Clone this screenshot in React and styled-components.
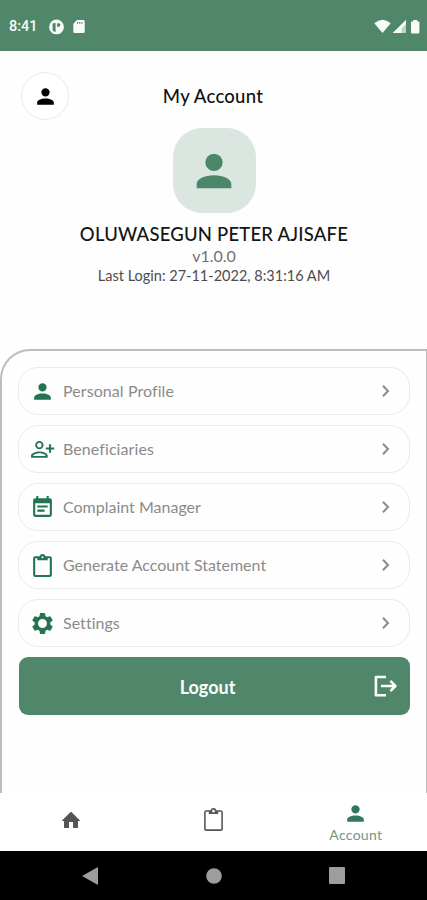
import React from "react";
import styled, { createGlobalStyle } from "styled-components";

const Global = createGlobalStyle`
  * { box-sizing: border-box; }
  body { margin: 0; background: #fff; font-family: Lato, "Open Sans", sans-serif; }
`;

const Screen = styled.div`
  width: 427px;
  height: 900px;
  display: flex;
  flex-direction: column;
  overflow: hidden;
  background: #fefefe;
`;

const StatusBar = styled.div`
  height: 51px;
  flex: none;
  display: flex;
  align-items: center;
  justify-content: space-between;
  padding: 2px 5px 0 9px;
  background: #50876b;
  color: #f7fcf8;
`;

const StatusGroup = styled.div`
  display: flex;
  align-items: center;
  gap: ${(p) => p.$gap}px;
`;

const Clock = styled.span`
  width: 30px;
  margin-right: 2px;
  font: 500 14.5px/18px Roboto, sans-serif;
  white-space: nowrap;
`;

const Header = styled.header`
  height: 77px;
  flex: none;
  display: grid;
  grid-template-columns: 48px 1fr 48px;
  align-items: center;
  padding: 13px 22px 0 21px;
`;

const RoundButton = styled.button`
  width: 48px;
  height: 48px;
  display: flex;
  align-items: center;
  justify-content: center;
  padding: 0;
  border: 1px solid #e9ecec;
  border-radius: 50%;
  background: #fff;
  color: #000;
`;

const Title = styled.h1`
  margin: 0;
  text-align: center;
  font-size: 18.5px;
  font-weight: 500;
  line-height: 24px;
  letter-spacing: 0.25px;
  color: #111;
`;

const Profile = styled.section`
  height: 221px;
  flex: none;
  display: flex;
  flex-direction: column;
  align-items: center;
  padding-left: 1px;
`;

const Avatar = styled.div`
  width: 83px;
  height: 85px;
  display: flex;
  align-items: center;
  justify-content: center;
  border-radius: 29px;
  background: #dce6e1;
  color: #4c8769;
`;

const Line = styled.div`
  margin-top: ${(p) => p.$top}px;
  font-size: ${(p) => p.$size}px;
  font-weight: ${(p) => p.$weight || 400};
  line-height: 20px;
  letter-spacing: ${(p) => p.$spacing || 0}px;
  color: ${(p) => p.$color};
  white-space: nowrap;
`;

const Panel = styled.main`
  height: 444px;
  flex: none;
  display: flex;
  flex-direction: column;
  gap: 10px;
  padding: 16px 16px 0 16px;
  border: 2px solid #bdbdbd;
  border-right-width: 1px;
  border-bottom: 0;
  border-top-left-radius: 30px;
`;

const MenuRow = styled.button`
  width: 392px;
  height: 48px;
  flex: none;
  display: grid;
  grid-template-columns: 25px 1fr 22px;
  align-items: center;
  column-gap: 8px;
  padding: 0 12px 0 11px;
  border: 1px solid #e8ebeb;
  border-radius: 20px;
  background: #fefefe;
  color: #237453;
  text-align: left;
`;

const MenuLabel = styled.span`
  font: 400 16px/20px Lato, sans-serif;
  letter-spacing: ${(p) => p.$spacing || 0}px;
  color: #8b8b8b;
`;

const LogoutButton = styled.button`
  width: 391px;
  height: 58px;
  flex: none;
  display: grid;
  grid-template-columns: 15px 1fr 28px;
  align-items: center;
  margin-left: 1px;
  padding: 0 11px 0 10px;
  border: 0;
  border-radius: 9px;
  background: #50876b;
  color: #fafffb;
`;

const LogoutLabel = styled.span`
  grid-column: 2;
  padding-top: 2px;
  font: 700 18px/22px Lato, sans-serif;
`;

const TabBar = styled.nav`
  height: 58px;
  flex: none;
  display: grid;
  grid-template-columns: repeat(3, 1fr);
  background: #fff;
`;

const Tab = styled.div`
  display: flex;
  flex-direction: column;
  align-items: center;
  justify-content: center;
  padding-bottom: ${(p) => p.$bottom || 0}px;
  color: ${(p) => (p.$active ? "#30795a" : "#555")};
`;

const TabLabel = styled.span`
  font-size: 14px;
  line-height: 17px;
  letter-spacing: 0.3px;
  color: #6a9a82;
`;

const SystemBar = styled.div`
  height: 49px;
  flex: none;
  display: flex;
  align-items: center;
  justify-content: space-between;
  padding: 0 82px 0 82px;
  background: #000;
  color: #9d9d9d;
`;

const Svg = styled.svg`
  display: block;
  flex: none;
  fill: currentColor;
`;

const ChevronSvg = styled(Svg)`
  fill: none;
  stroke: #8b8b8b;
  stroke-width: 2;
`;

const LogoutSvg = styled(Svg)`
  fill: none;
  stroke: currentColor;
  stroke-width: 2.6;
  stroke-linejoin: round;
`;

const paths = {
  person:
    "M12 4a4 4 0 1 1 0 8a4 4 0 0 1 0-8M12 14c4.42 0 8 1.79 8 4v2H4v-2c0-2.21 3.58-4 8-4Z",
  personAdd:
    "M9 3.8a4 4 0 1 1 0 8a4 4 0 0 1 0-8m0 1.8a2.2 2.2 0 1 0 0 4.4a2.2 2.2 0 0 0 0-4.4M9 13.8c2.67 0 8 1.34 8 4V20H1v-2.2c0-2.66 5.33-4 8-4m0 1.8c-2.7 0-5.8 1.3-6.1 2.6h12.2c-.3-1.3-3.4-2.6-6.1-2.6M18.2 7h2v3h3v2h-3v3h-2v-3h-3v-2h3Z",
  note:
    "M17 10H7v2h10v-2m2-7h-1V1h-2v2H8V1H6v2H5a2 2 0 0 0-2 2v14a2 2 0 0 0 2 2h14a2 2 0 0 0 2-2V5a2 2 0 0 0-2-2m0 16H5V8h14v11m-5-5H7v2h7v-2Z",
  clipboard:
    "M19 3h-4.18C14.4 1.84 13.3 1 12 1s-2.4.84-2.82 2H5a2 2 0 0 0-2 2v16a2 2 0 0 0 2 2h14a2 2 0 0 0 2-2V5a2 2 0 0 0-2-2m-7 0a1 1 0 1 1 0 2a1 1 0 0 1 0-2M7 7h10V5h2v16H5V5h2v2Z",
  clipboardThin:
    "M19 3h-4.18C14.4 1.84 13.3 1 12 1s-2.4.84-2.82 2H5a2 2 0 0 0-2 2v16a2 2 0 0 0 2 2h14a2 2 0 0 0 2-2V5a2 2 0 0 0-2-2m-7-.3a1.3 1.3 0 1 1 0 2.6a1.3 1.3 0 0 1 0-2.6M7.5 6.8h9V4.6h3v16.8h-15V4.6h3v2.2Z",
  gear:
    "M12 16.3a4.3 4.3 0 1 1 0-8.6a4.3 4.3 0 0 1 0 8.6m7.43-3.33c.04-.32.07-.64.07-.97s-.03-.66-.07-1l2.11-1.63c.19-.15.24-.42.12-.64l-2-3.46c-.12-.22-.39-.31-.61-.22l-2.49 1c-.52-.39-1.06-.73-1.69-.98l-.37-2.65A.506.506 0 0 0 14 2h-4c-.25 0-.46.18-.5.42l-.37 2.65c-.63.25-1.17.59-1.69.98l-2.49-1c-.22-.09-.49 0-.61.22l-2 3.46c-.13.22-.07.49.12.64L4.57 11c-.04.34-.07.67-.07 1s.03.65.07.97l-2.11 1.66c-.19.15-.25.42-.12.64l2 3.46c.12.22.39.3.61.22l2.49-1.01c.52.4 1.06.74 1.69.99l.37 2.65c.04.24.25.42.5.42h4c.25 0 .46-.18.5-.42l.37-2.65c.63-.26 1.17-.59 1.69-.99l2.49 1.01c.22.08.49 0 .61-.22l2-3.46c.12-.22.07-.49-.12-.64l-2.11-1.66Z",
};

function Icon({ name, size }) {
  return (
    <Svg width={size} height={size} viewBox="0 0 24 24">
      <path d={paths[name]} fillRule="evenodd" />
    </Svg>
  );
}

function Chevron() {
  return (
    <ChevronSvg width="22" height="22" viewBox="0 0 22 22">
      <path d="M8 5.8l5 5.2L8 16.2" />
    </ChevronSvg>
  );
}

const menu = [
  { icon: "person", label: "Personal Profile", spacing: 0.08 },
  { icon: "personAdd", label: "Beneficiaries", spacing: 0.08 },
  { icon: "note", label: "Complaint Manager" },
  { icon: "clipboard", label: "Generate Account Statement" },
  { icon: "gear", label: "Settings", spacing: 0.04 },
];

export default function App() {
  return (
    <Screen>
      <Global />
      <StatusBar>
        <StatusGroup $gap={8}>
          <Clock>8:41</Clock>
          <Svg width="15" height="16" viewBox="0 0 15 16">
            <path
              fillRule="evenodd"
              d="M7.5.5a7.3 7.3 0 1 1 0 14.8a7.3 7.3 0 0 1 0-14.8M3.6 4.6v6.6q1.2 1.6 3 1.8V4Q4.6 3.8 3.6 4.6ZM8 4.2v3.6h1.6q1.8-.3 1.8-1.8T9.6 4.2Z"
            />
          </Svg>
          <Svg width="14" height="15" viewBox="0 0 14 15">
            <path
              fillRule="evenodd"
              d="M5 1h6.5Q12.7 1 12.7 2.2v10.6q0 1.2-1.2 1.2h-9q-1.2 0-1.2-1.2V4.8ZM5 3v1.8h1.1V3ZM7.2 3v1.8h1.1V3ZM9.4 3v1.8h1.1V3Z"
            />
          </Svg>
        </StatusGroup>
        <StatusGroup $gap={1}>
          <Svg width="17" height="15" viewBox="0 0 17 15">
            <path d="M.3 4.2Q8.5-2.8 16.7 4.2L8.5 14Z" />
          </Svg>
          <Svg width="15" height="15" viewBox="0 0 15 15">
            <path opacity=".65" d="M14 1v13H.8Z" />
            <path d="M14 1v4l-4.5 4.5V14H.8Z" />
          </Svg>
          <Svg width="14" height="16" viewBox="0 0 14 16">
            <path d="M5.2 1h4v1.4h1.2q1 0 1 1v10.2q0 1-1 1H4q-1 0-1-1V3.4q0-1 1-1h1.2Z" />
          </Svg>
        </StatusGroup>
      </StatusBar>

      <Header>
        <RoundButton aria-label="Profile">
          <Icon name="person" size={25} />
        </RoundButton>
        <Title>My Account</Title>
      </Header>

      <Profile>
        <Avatar>
          <Icon name="person" size={52} />
        </Avatar>
        <Line $top={11} $size={18.5} $weight={500} $spacing={0.2} $color="#151515">
          OLUWASEGUN PETER AJISAFE
        </Line>
        <Line $top={2} $size={16} $color="#707070">
          v1.0.0
        </Line>
        <Line $top={0} $size={14.5} $color="#4c4c4c">
          Last Login: 27-11-2022, 8:31:16 AM
        </Line>
      </Profile>

      <Panel>
        {menu.map(({ icon, label, spacing }) => (
          <MenuRow key={label}>
            <Icon name={icon} size={25} />
            <MenuLabel $spacing={spacing}>{label}</MenuLabel>
            <Chevron />
          </MenuRow>
        ))}
        <LogoutButton>
          <LogoutLabel>Logout</LogoutLabel>
          <LogoutSvg width="28" height="28" viewBox="0 0 28 28">
            <path d="M15 5H4.9v18.2H15M10 14h14M19.4 8.9l5 5.1l-5 5.1" />
          </LogoutSvg>
        </LogoutButton>
      </Panel>

      <TabBar>
        <Tab $bottom={5}>
          <Svg width="20" height="20" viewBox="0 0 20 20">
            <path d="M18.672 11H17v6c0 .445-.194 1-1 1h-4v-6H8v6H4c-.806 0-1-.555-1-1v-6H1.328c-.598 0-.47-.324-.06-.748L9.292 2.22c.195-.202.451-.302.708-.312.257.01.513.109.708.312l8.023 8.031c.411.425.539.749-.059.749z" />
          </Svg>
        </Tab>
        <Tab $bottom={6}>
          <Icon name="clipboardThin" size={25} />
        </Tab>
        <Tab $active $bottom={1}>
          <Icon name="person" size={25} />
          <TabLabel>Account</TabLabel>
        </Tab>
      </TabBar>

      <SystemBar>
        <Svg width="16" height="18" viewBox="0 0 16 18">
          <path d="M16 0v18L0 9Z" />
        </Svg>
        <Svg width="16" height="16" viewBox="0 0 16 16">
          <circle cx="8" cy="8" r="7.8" />
        </Svg>
        <Svg width="16" height="17" viewBox="0 0 16 17">
          <rect width="16" height="17" rx="1" />
        </Svg>
      </SystemBar>
    </Screen>
  );
}
